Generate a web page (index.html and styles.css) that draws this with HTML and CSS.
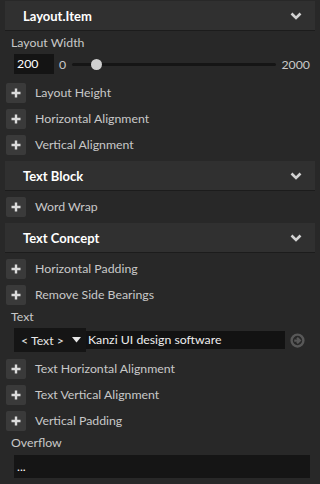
FILE: index.html
```html
<!DOCTYPE html>
<html lang="en">
<head>
  <meta charset="UTF-8" />
  <meta name="viewport" content="width=device-width, initial-scale=1.0"/>
  <title>Properties</title>
  <link rel="stylesheet" href="styles.css">
</head>
<body>
  <div class="panel">

    <div class="section-header">
      <span>Layout.Item</span>
      <svg class="chevron" width="12" height="8" viewBox="0 0 12 8"><path d="M1.5 1.5 L6 6 L10.5 1.5" /></svg>
    </div>
    <div class="field">
      <div class="field-label">Layout Width</div>
      <div class="slider-row">
        <div class="num-input">200</div>
        <span class="range-min">0</span>
        <div class="track"><div class="thumb" style="left: 11.6%"></div></div>
        <span class="range-max">2000</span>
      </div>
    </div>
    <div class="prop after-field"><span class="add"><svg width="10" height="10" viewBox="0 0 10 10"><path d="M5 0.5 V9.5 M0.5 5 H9.5"/></svg></span><span>Layout Height</span></div>
    <div class="prop"><span class="add"><svg width="10" height="10" viewBox="0 0 10 10"><path d="M5 0.5 V9.5 M0.5 5 H9.5"/></svg></span><span>Horizontal Alignment</span></div>
    <div class="prop"><span class="add"><svg width="10" height="10" viewBox="0 0 10 10"><path d="M5 0.5 V9.5 M0.5 5 H9.5"/></svg></span><span>Vertical Alignment</span></div>

    <div class="section-header">
      <span>Text Block</span>
      <svg class="chevron" width="12" height="8" viewBox="0 0 12 8"><path d="M1.5 1.5 L6 6 L10.5 1.5" /></svg>
    </div>
    <div class="prop"><span class="add"><svg width="10" height="10" viewBox="0 0 10 10"><path d="M5 0.5 V9.5 M0.5 5 H9.5"/></svg></span><span>Word Wrap</span></div>

    <div class="section-header">
      <span>Text Concept</span>
      <svg class="chevron" width="12" height="8" viewBox="0 0 12 8"><path d="M1.5 1.5 L6 6 L10.5 1.5" /></svg>
    </div>
    <div class="prop"><span class="add"><svg width="10" height="10" viewBox="0 0 10 10"><path d="M5 0.5 V9.5 M0.5 5 H9.5"/></svg></span><span>Horizontal Padding</span></div>
    <div class="prop"><span class="add"><svg width="10" height="10" viewBox="0 0 10 10"><path d="M5 0.5 V9.5 M0.5 5 H9.5"/></svg></span><span>Remove Side Bearings</span></div>
    <div class="field">
      <div class="field-label">Text</div>
      <div class="text-row">
        <div class="binding">&lt; Text &gt;<svg class="drop" width="9" height="6" viewBox="0 0 9 6"><path d="M0 0 H9 L4.5 5.5 Z"/></svg></div>
        <div class="text-input">Kanzi UI design software</div>
        <svg class="go" width="15" height="15" viewBox="0 0 16 16">
          <circle cx="8" cy="8" r="6.3" fill="none" stroke="#585858" stroke-width="2.6"/>
          <path d="M4.5 8 H10 M7.5 5 L10.5 8 L7.5 11" fill="none" stroke="#585858" stroke-width="2.4"/>
        </svg>
      </div>
    </div>
    <div class="prop after-text"><span class="add"><svg width="10" height="10" viewBox="0 0 10 10"><path d="M5 0.5 V9.5 M0.5 5 H9.5"/></svg></span><span>Text Horizontal Alignment</span></div>
    <div class="prop"><span class="add"><svg width="10" height="10" viewBox="0 0 10 10"><path d="M5 0.5 V9.5 M0.5 5 H9.5"/></svg></span><span>Text Vertical Alignment</span></div>
    <div class="prop"><span class="add"><svg width="10" height="10" viewBox="0 0 10 10"><path d="M5 0.5 V9.5 M0.5 5 H9.5"/></svg></span><span>Vertical Padding</span></div>
    <div class="field">
      <div class="field-label">Overflow</div>
      <div class="wide-input">...</div>
    </div>

  </div>
</body>
</html>
```

FILE: styles.css
```css
* {
  box-sizing: border-box;
}

body {
  margin: 0;
  background: #282828;
  color: #c8c8c8;
  font-family: Lato, "Open Sans", sans-serif;
  font-size: 12.3px;
}

.panel {
  padding-top: 1px;
}

.section-header {
  display: flex;
  align-items: center;
  justify-content: space-between;
  height: 30px;
  margin: 6px 5px 0;
  padding: 0 13px 0 18px;
  background: #303030;
  border-bottom: 1px solid #1c1c1c;
  color: #fff;
  font-size: 13px;
  font-weight: bold;
}

.section-header:first-child {
  margin-top: 0;
}

.chevron path {
  fill: none;
  stroke: #d2d2d2;
  stroke-width: 2.6;
}

.field {
  padding: 0 10px 0 11px;
  margin-top: 2px;
}

.field-label {
  height: 20px;
  line-height: 19px;
}

.slider-row {
  display: flex;
  align-items: center;
  height: 20px;
  margin-top: 1px;
  padding-left: 3px;
}

.num-input {
  width: 40px;
  height: 20px;
  line-height: 20px;
  padding-left: 3px;
  background: #141414;
  color: #fff;
}

.range-min {
  margin-left: 5px;
}

.track {
  position: relative;
  flex: 1;
  height: 3px;
  margin: 0 5px 0 6px;
  background: #151515;
  border-radius: 2px;
}

.thumb {
  position: absolute;
  top: -4px;
  width: 11px;
  height: 11px;
  margin-left: -5px;
  border-radius: 50%;
  background: #d0d0d0;
}

.prop {
  display: flex;
  align-items: center;
  gap: 9px;
  height: 20px;
  margin-top: 6px;
  padding-left: 6px;
  line-height: 18px;
}

.prop.after-field {
  margin-top: 9px;
}

.prop.after-text {
  margin-top: 7px;
}

.add {
  display: flex;
  align-items: center;
  justify-content: center;
  width: 20px;
  height: 20px;
  border-radius: 2px;
  background: #3a3a3a;
}

.add path {
  stroke: #dcdcdc;
  stroke-width: 2.4;
}

.text-row {
  display: flex;
  align-items: center;
  height: 24px;
  margin-top: 1px;
  padding-left: 3px;
}

.binding {
  display: flex;
  align-items: center;
  width: 72px;
  height: 24px;
  padding-left: 7px;
  background: #151515;
  color: #e6e6e6;
}

.drop {
  margin-left: 8px;
}

.drop path {
  fill: #e6e6e6;
}

.text-input {
  width: 199px;
  height: 18px;
  line-height: 18px;
  padding-left: 2px;
  background: #121212;
  color: #eee;
}

.go {
  margin-left: 5px;
}

.wide-input {
  height: 23px;
  line-height: 23px;
  margin-top: 2px;
  margin-left: 3px;
  padding-left: 3px;
  background: #151515;
  color: #fff;
}
```
